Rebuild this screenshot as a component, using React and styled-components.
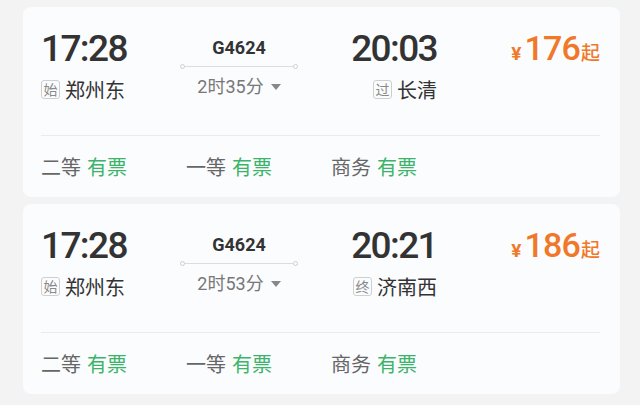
import React from "react";
import styled, { createGlobalStyle } from "styled-components";

const GlobalStyle = createGlobalStyle`
  body {
    margin: 0;
    background: #f3f3f3;
    font-family: Roboto, "Noto Sans CJK SC", sans-serif;
  }
`;

const List = styled.div`
  display: flex;
  flex-direction: column;
  gap: 7px;
  padding: 7px 0 0 23px;
  width: 597px;
`;

const Card = styled.div`
  background: #fbfcfe;
  border-radius: 8px;
  padding: 20px 20px 0 18px;
  height: 190px;
  box-sizing: border-box;
`;

const TopRow = styled.div`
  display: flex;
  height: 108px;
`;

const Side = styled.div`
  width: ${(p) => p.$w}px;
  display: flex;
  flex-direction: column;
  align-items: ${(p) => (p.$right ? "flex-end" : "flex-start")};
`;

const Time = styled.div`
  font-size: 37px;
  line-height: 44px;
  font-weight: 500;
  color: #333;
  letter-spacing: -1.6px;
`;

const Station = styled.div`
  display: flex;
  align-items: center;
  gap: 5px;
  margin-top: 6px;
  height: 24px;
  font-size: 20px;
  color: #333;
  font-family: "Noto Sans CJK SC", sans-serif;
`;

const Badge = styled.span`
  width: 19px;
  height: 19px;
  box-sizing: border-box;
  border: 1px solid #cfcfcf;
  border-radius: 3px;
  font-size: 14px;
  line-height: 17px;
  text-align: center;
  color: #8a8a8a;
`;

const Middle = styled.div`
  width: 118px;
  display: flex;
  flex-direction: column;
  align-items: center;
  padding-top: 11px;
`;

const TrainNo = styled.div`
  font-size: 18px;
  line-height: 20px;
  font-weight: 700;
  color: #333;
`;

const Track = styled.div`
  display: flex;
  align-items: center;
  width: 100%;
  margin-top: 6px;
`;

const Dot = styled.span`
  width: 3px;
  height: 3px;
  border: 1px solid #d0d0d0;
  border-radius: 50%;
`;

const Rail = styled.span`
  flex: 1;
  height: 1px;
  background: #dcdcdc;
`;

const Duration = styled.div`
  display: flex;
  align-items: center;
  gap: 7px;
  margin-top: 7px;
  font-size: 18px;
  line-height: 22px;
  color: #777;
`;

const Caret = styled.span`
  width: 0;
  height: 0;
  border-left: 5px solid transparent;
  border-right: 5px solid transparent;
  border-top: 6px solid #888;
`;

const Price = styled.div`
  flex: 1;
  display: flex;
  justify-content: flex-end;
  align-items: baseline;
  color: #f07828;
  padding-top: 1px;
  height: 40px;
`;

const Yen = styled.span`
  font-size: 19px;
  font-weight: 700;
  margin-right: 3px;
`;

const Amount = styled.span`
  font-size: 34px;
  line-height: 40px;
  font-weight: 500;
  letter-spacing: -0.8px;
`;

const Qi = styled.span`
  font-size: 19px;
  font-family: "Noto Sans CJK SC", sans-serif;
  font-weight: 500;
  margin-left: 1px;
`;

const Divider = styled.div`
  height: 1px;
  background: #ebebeb;
`;

const Seats = styled.div`
  display: flex;
  height: 61px;
  align-items: center;
  font-family: "Noto Sans CJK SC", sans-serif;
  font-size: 20px;
`;

const Seat = styled.div`
  width: 145px;
  display: flex;
  gap: 6px;
`;

const SeatName = styled.span`
  color: #666;
`;

const SeatState = styled.span`
  color: #3bb46a;
`;

const trains = [
  {
    dep: "17:28",
    from: "郑州东",
    fromTag: "始",
    no: "G4624",
    dur: "2时35分",
    arr: "20:03",
    to: "长清",
    toTag: "过",
    price: "176",
  },
  {
    dep: "17:28",
    from: "郑州东",
    fromTag: "始",
    no: "G4624",
    dur: "2时53分",
    arr: "20:21",
    to: "济南西",
    toTag: "终",
    price: "186",
  },
];

const seats = ["二等", "一等", "商务"];

const TrainCard = ({ t }) => (
  <Card>
    <TopRow>
      <Side $w={139}>
        <Time>{t.dep}</Time>
        <Station>
          <Badge>{t.fromTag}</Badge>
          {t.from}
        </Station>
      </Side>
      <Middle>
        <TrainNo>{t.no}</TrainNo>
        <Track>
          <Dot />
          <Rail />
          <Dot />
        </Track>
        <Duration>
          {t.dur}
          <Caret />
        </Duration>
      </Middle>
      <Side $w={139} $right>
        <Time>{t.arr}</Time>
        <Station>
          <Badge>{t.toTag}</Badge>
          {t.to}
        </Station>
      </Side>
      <Price>
        <Yen>¥</Yen>
        <Amount>{t.price}</Amount>
        <Qi>起</Qi>
      </Price>
    </TopRow>
    <Divider />
    <Seats>
      {seats.map((s) => (
        <Seat key={s}>
          <SeatName>{s}</SeatName>
          <SeatState>有票</SeatState>
        </Seat>
      ))}
    </Seats>
  </Card>
);

export default function App() {
  return (
    <>
      <GlobalStyle />
      <List>
        {trains.map((t, i) => (
          <TrainCard key={i} t={t} />
        ))}
      </List>
    </>
  );
}
